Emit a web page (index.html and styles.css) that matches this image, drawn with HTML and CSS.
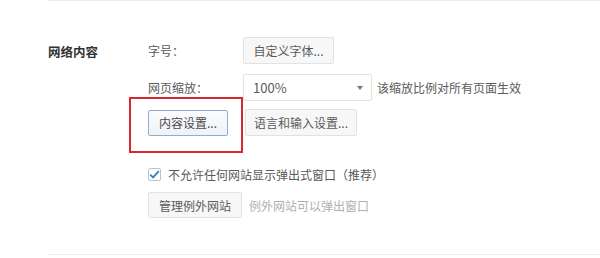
FILE: index.html
```html
<!DOCTYPE html>
<html lang="zh-CN">
<head>
    <meta charset="UTF-8">
    <title>设置 - 网络内容</title>
    <link rel="stylesheet" href="styles.css">
</head>
<body>
    <section class="group">
        <div class="group-title">网络内容</div>

        <div class="group-body">
            <div class="row row-first">
                <span class="row-label">字号：</span>
                <button class="btn btn-font">自定义字体...</button>
            </div>

            <div class="row row-zoom">
                <span class="row-label">网页缩放：</span>
                <div class="select">
                    <span>100%</span>
                    <span class="caret"></span>
                </div>
                <span class="note">该缩放比例对所有页面生效</span>
            </div>

            <div class="row row-buttons">
                <span class="marked">
                    <button class="btn btn-focus">内容设置...</button>
                    <span class="mark"></span>
                </span>
                <button class="btn btn-next">语言和输入设置...</button>
            </div>

            <label class="check-row">
                <span class="checkbox">
                    <svg width="11" height="9" viewBox="0 0 11 9">
                        <path d="M1.2 4.6 L4.1 7.4 L9.8 1.2" fill="none" stroke="#3a7bd5" stroke-width="1.8"/>
                    </svg>
                </span>
                不允许任何网站显示弹出式窗口（推荐）
            </label>

            <div class="row row-except">
                <button class="btn">管理例外网站</button>
                <span class="hint">例外网站可以弹出窗口</span>
            </div>
        </div>
    </section>
</body>
</html>
```

FILE: styles.css
```css
body {
    margin: 0;
    background: #fff;
    font-family: "Noto Sans CJK SC", "Noto Sans", sans-serif;
    font-size: 12px;
    color: #555;
}

.group {
    margin-left: 48px;
    height: 253px;
    border-top: 1px solid #ececec;
    border-bottom: 1px solid #ececec;
    display: grid;
    grid-template-columns: 100px 1fr;
    align-items: start;
}

.group-title {
    padding-top: 42px;
    font-size: 12.5px;
    font-weight: bold;
    color: #333;
    line-height: 18px;
}

.group-body {
    padding-top: 36px;
}

.row {
    display: flex;
    align-items: center;
    height: 27px;
}

.row-zoom {
    margin-top: 10px;
}

.row-buttons {
    margin-top: 8px;
}

.row-except {
    margin-top: 9px;
    height: 26px;
}

.row-label {
    width: 95px;
    color: #5a5a5a;
}

.btn {
    height: 100%;
    padding: 0 10px;
    font-family: inherit;
    font-size: 12px;
    color: #5a5a5a;
    background: #f7f7f7;
    border: 1px solid #e2e2e2;
    border-radius: 2px;
}

.btn-font {
    width: 91px;
    padding: 0;
}

.btn-focus {
    width: 80px;
    height: 26px;
    padding: 0;
    background: linear-gradient(#fbfcfe, #eef2f7);
    border-color: #8eaed6;
    color: #4a4a4a;
}

.btn-next {
    width: 112px;
    padding: 0;
    margin-left: 17px;
}

.marked {
    position: relative;
    display: flex;
    height: 100%;
    align-items: center;
}

.mark {
    position: absolute;
    left: -19px;
    top: -12px;
    right: -15px;
    bottom: -17px;
    border: 2px solid #d7282f;
}

.select {
    box-sizing: border-box;
    width: 129px;
    height: 100%;
    padding: 0 8px 0 9px;
    display: flex;
    align-items: center;
    justify-content: space-between;
    background: #fff;
    border: 1px solid #e2e2e2;
    border-radius: 2px;
    font-size: 13px;
    color: #5a5a5a;
}

.caret {
    width: 0;
    height: 0;
    border-left: 3px solid transparent;
    border-right: 3px solid transparent;
    border-top: 4px solid #777;
}

.note {
    margin-left: 5px;
    color: #5a5a5a;
}

.check-row {
    display: flex;
    align-items: center;
    height: 18px;
    margin-top: 29px;
    color: #5a5a5a;
}

.checkbox {
    box-sizing: border-box;
    width: 13px;
    height: 13px;
    margin-right: 7px;
    display: flex;
    align-items: center;
    justify-content: center;
    border: 1px solid #b9c4d2;
    border-radius: 2px;
    background: #fff;
}

.hint {
    margin-left: 7px;
    color: #b0b0b0;
}
```
